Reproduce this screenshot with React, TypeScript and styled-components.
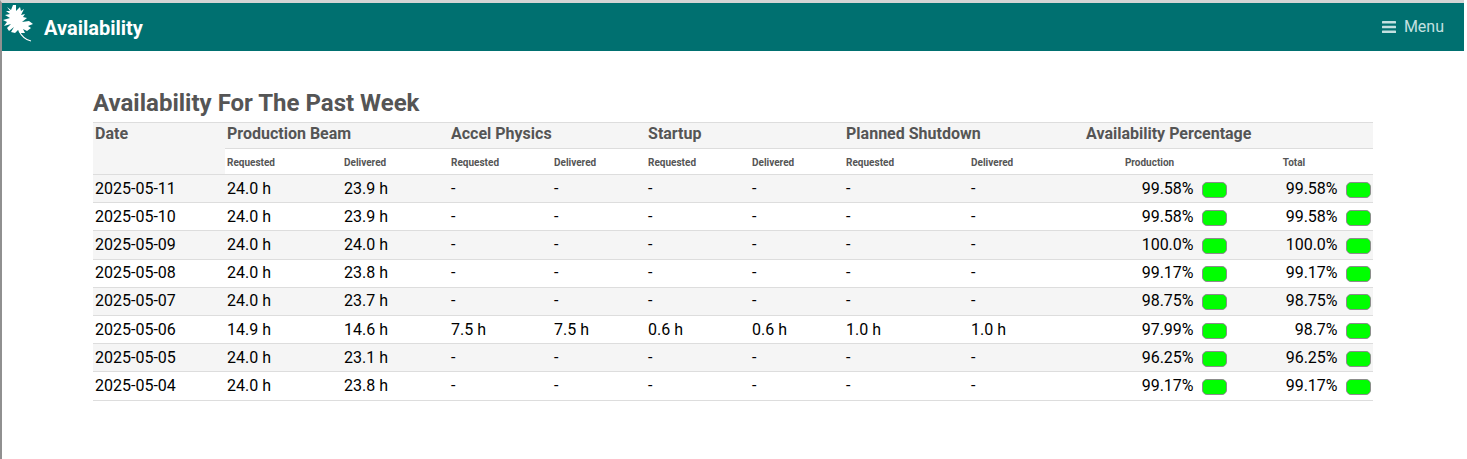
import React from "react";
import styled, { createGlobalStyle } from "styled-components";

const Global = createGlobalStyle`
  html, body { margin: 0; padding: 0; background: #fff; }
  body { font-family: Roboto, "Liberation Sans", sans-serif; }
`;

const Frame = styled.div`
  width: 1464px;
  height: 459px;
  box-sizing: border-box;
  overflow: hidden;
  border-top: 3px solid #d4d4d4;
  border-left: 2px solid #909090;
  background: #fff;
`;

const Bar = styled.header`
  height: 48px;
  background: #007070;
  display: flex;
  align-items: center;
  justify-content: space-between;
  padding-right: 20px;
  color: #fff;
`;

const Brand = styled.div`
  display: flex;
  align-items: flex-start;
  height: 100%;
  font-weight: 700;
  font-size: 20px;
`;

const BrandText = styled.span`
  margin: 13px 0 0 8px;
  line-height: 24px;
`;

const Logo = styled.svg`
  width: 34px;
  height: 40px;
  margin: 1px 0 0 0;
  fill: #fff;
  flex: none;
`;

const MenuBtn = styled.div`
  display: flex;
  align-items: center;
  gap: 8px;
  font-size: 16px;
  color: #c4e0e0;
  margin-top: -1px;
`;

const Main = styled.main`
  padding: 36px 0 0 91px;
  width: 1280px;
`;

const Title = styled.h2`
  margin: 0;
  font-size: 24px;
  line-height: 32px;
  font-weight: 700;
  color: #555;
  height: 35px;
  box-sizing: border-box;
`;

const Table = styled.table`
  width: 1280px;
  table-layout: fixed;
  border-collapse: collapse;
  color: #000;
`;

const GroupHead = styled.th`
  height: 25px;
  padding: 0 2px;
  background: #f5f5f5;
  border-top: 1px solid #ddd;
  border-bottom: 1px solid #ddd;
  text-align: left;
  vertical-align: top;
  font-size: 16px;
  line-height: 22px;
  font-weight: 700;
  color: #555;
`;

const SubHead = styled.th<{ $pad?: number }>`
  height: 23px;
  padding: 2px ${(p) => p.$pad ?? 2}px 0 2px;
  border-bottom: 1px solid #ddd;
  text-align: ${(p) => (p.$pad ? "center" : "left")};
  font-size: 10px;
  font-weight: 700;
  color: #555;
`;

const Row = styled.tr<{ $shade: boolean }>`
  background: ${(p) => (p.$shade ? "#f5f5f5" : "#fff")};
`;

const Cell = styled.td`
  height: 27.2px;
  padding: 0 2px;
  border-bottom: 1px solid #ddd;
  font-size: 16px;
  line-height: 20px;
  white-space: nowrap;
`;

const PctCell = styled(Cell)`
  padding: 0;
`;

const PctInner = styled.div`
  display: flex;
  justify-content: flex-end;
  align-items: center;
  gap: 8.5px;
  padding-right: 2px;
`;

const Lamp = styled.span`
  display: block;
  width: 25px;
  height: 16px;
  margin-top: 2px;
  box-sizing: border-box;
  border-radius: 5px;
  background: #00ff00;
  border: 1.5px solid #8c8c8c;
`;

const widths = [132, 117, 107, 103, 94, 104, 94, 125, 115, 145, 144];

const rows: [string, string, string, string, string, string, string, string, string, string, string][] = [
  ["2025-05-11", "24.0 h", "23.9 h", "-", "-", "-", "-", "-", "-", "99.58%", "99.58%"],
  ["2025-05-10", "24.0 h", "23.9 h", "-", "-", "-", "-", "-", "-", "99.58%", "99.58%"],
  ["2025-05-09", "24.0 h", "24.0 h", "-", "-", "-", "-", "-", "-", "100.0%", "100.0%"],
  ["2025-05-08", "24.0 h", "23.8 h", "-", "-", "-", "-", "-", "-", "99.17%", "99.17%"],
  ["2025-05-07", "24.0 h", "23.7 h", "-", "-", "-", "-", "-", "-", "98.75%", "98.75%"],
  ["2025-05-06", "14.9 h", "14.6 h", "7.5 h", "7.5 h", "0.6 h", "0.6 h", "1.0 h", "1.0 h", "97.99%", "98.7%"],
  ["2025-05-05", "24.0 h", "23.1 h", "-", "-", "-", "-", "-", "-", "96.25%", "96.25%"],
  ["2025-05-04", "24.0 h", "23.8 h", "-", "-", "-", "-", "-", "-", "99.17%", "99.17%"],
];

const groups = ["Production Beam", "Accel Physics", "Startup", "Planned Shutdown"];

const OakLeaf = () => (
  <Logo viewBox="4 4 34 40" aria-hidden="true">
    <path d="M9 7L13 10L15 5L18 5L18 11L22 7L23 11L26 9L23 15L27 14L25 17L29 18L24 22L31 21L35 24L30 26L33 28L29 31L25 29L27 33L22 33L20 30L17 33L13 32L16 27L11 31L9 28L13 24L6 26L9 22L5 20L12 18L7 15L12 14L8 11L12 11Z" />
    <path d="M21 31C24 37 28 40 33 41" fill="none" stroke="#fff" strokeWidth="1.1" />
  </Logo>
);

const MenuIcon = () => (
  <svg width="14" height="12" viewBox="0 0 14 12" fill="#c4e0e0" aria-hidden="true">
    <rect y="0" width="14" height="2.4" rx="0.5" />
    <rect y="4.8" width="14" height="2.4" rx="0.5" />
    <rect y="9.6" width="14" height="2.4" rx="0.5" />
  </svg>
);

export default function App() {
  return (
    <Frame>
      <Global />
      <Bar>
        <Brand>
          <OakLeaf />
          <BrandText>Availability</BrandText>
        </Brand>
        <MenuBtn>
          <MenuIcon />
          Menu
        </MenuBtn>
      </Bar>
      <Main>
        <Title>Availability For The Past Week</Title>
        <Table>
          <colgroup>
            {widths.map((w, i) => (
              <col key={i} style={{ width: w }} />
            ))}
          </colgroup>
          <thead>
            <tr>
              <GroupHead rowSpan={2}>Date</GroupHead>
              {groups.map((g) => (
                <GroupHead key={g} colSpan={2}>
                  {g}
                </GroupHead>
              ))}
              <GroupHead colSpan={2}>Availability Percentage</GroupHead>
            </tr>
            <tr>
              {groups.flatMap((g) => [
                <SubHead key={g + "r"}>Requested</SubHead>,
                <SubHead key={g + "d"}>Delivered</SubHead>,
              ])}
              <SubHead $pad={16}>Production</SubHead>
              <SubHead $pad={16}>Total</SubHead>
            </tr>
          </thead>
          <tbody>
            {rows.map((r, i) => (
              <Row key={r[0]} $shade={i % 2 === 0}>
                {r.slice(0, 9).map((v, j) => (
                  <Cell key={j}>{v}</Cell>
                ))}
                {r.slice(9).map((v, j) => (
                  <PctCell key={j}>
                    <PctInner>
                      {v}
                      <Lamp />
                    </PctInner>
                  </PctCell>
                ))}
              </Row>
            ))}
          </tbody>
        </Table>
      </Main>
    </Frame>
  );
}
